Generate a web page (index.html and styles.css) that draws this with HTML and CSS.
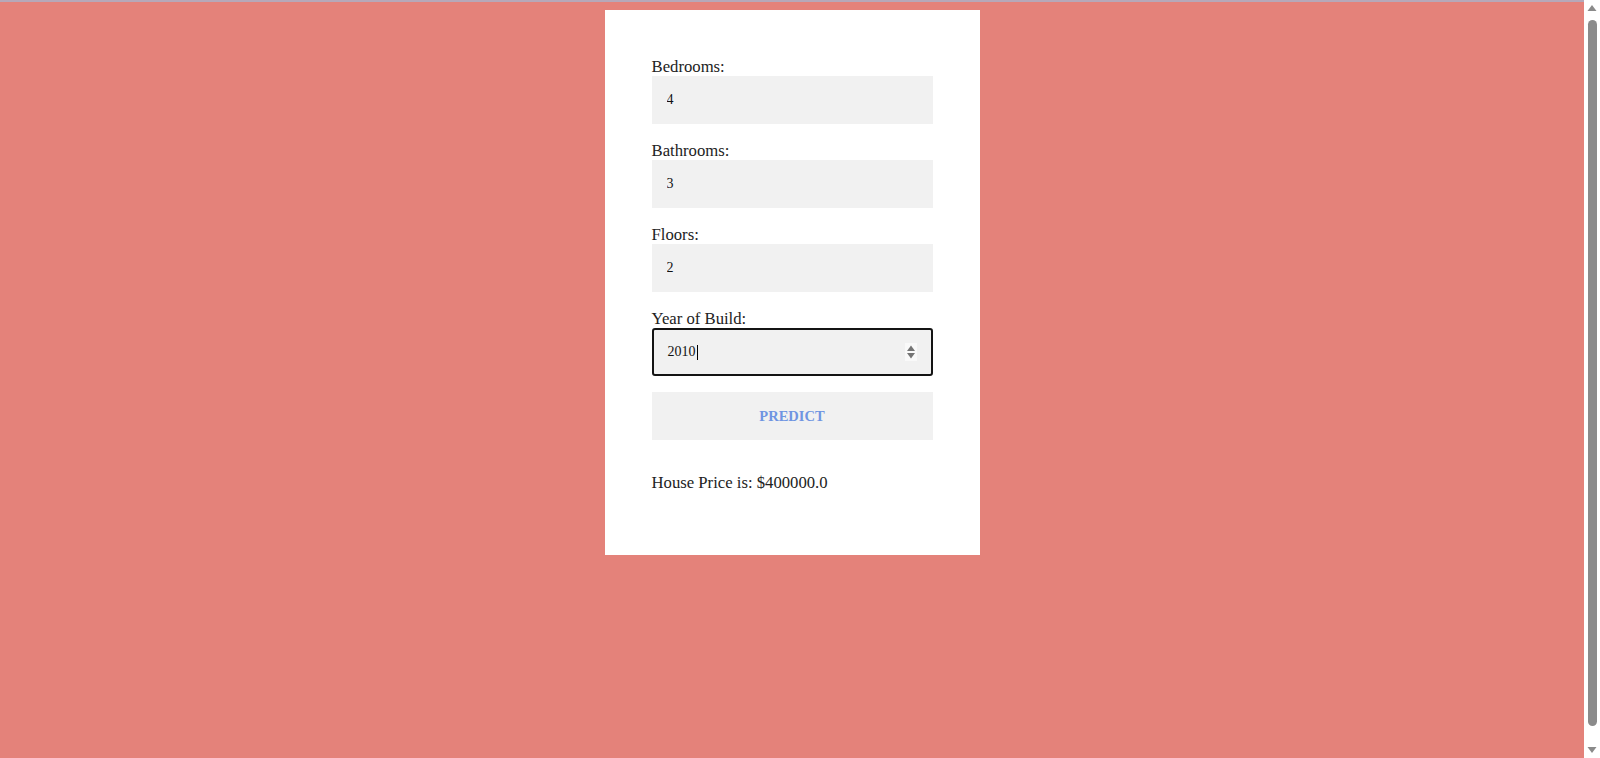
FILE: index.html
```html
<!DOCTYPE html>
<html lang="en">
<head>
<meta charset="utf-8">
<title>House Price Prediction</title>
<link rel="stylesheet" href="styles.css">
</head>
<body>
<div class="page">
  <main class="main">
    <form class="card">
      <label class="label" for="bedrooms">Bedrooms:</label>
      <input class="input" id="bedrooms" type="text" value="4">
      <label class="label" for="bathrooms">Bathrooms:</label>
      <input class="input" id="bathrooms" type="text" value="3">
      <label class="label" for="floors">Floors:</label>
      <input class="input" id="floors" type="text" value="2">
      <label class="label" for="year">Year of Build:</label>
      <div class="input input-focus" id="year">
        <span class="value">2010</span><span class="caret"></span>
        <svg class="spin" width="12" height="18" viewBox="0 0 12 18"><path d="M6 2.5 L10 8 H2 Z" fill="#747474"/><path d="M2 10 H10 L6 15.5 Z" fill="#747474"/></svg>
      </div>
      <button class="btn" type="button">PREDICT</button>
      <p class="result">House Price is: $400000.0</p>
    </form>
  </main>
  <div class="scrollbar">
    <svg class="arrow" width="16" height="16" viewBox="0 0 16 16"><path d="M3.5 11 L8 5 L12.5 11 Z" fill="#8a8a8a"/></svg>
    <div class="thumb"></div>
    <svg class="arrow" width="16" height="16" viewBox="0 0 16 16"><path d="M3.5 5 L12.5 5 L8 11 Z" fill="#8a8a8a"/></svg>
  </div>
</div>
</body>
</html>
```
FILE: styles.css
```css
html, body {
  margin: 0;
  padding: 0;
  height: 100%;
}
body {
  font-family: "Liberation Serif", "Times New Roman", serif;
  color: #222;
  background: #e4827a;
  overflow: hidden;
}
.page {
  display: flex;
  height: 100vh;
}
.main {
  flex: 1;
  border-top: 2px solid #b6a8b9;
  padding-top: 8px;
  display: flex;
  justify-content: center;
  align-items: flex-start;
}
.card {
  width: 375px;
  box-sizing: border-box;
  background: #fff;
  padding: 46px 47px 63px;
  display: flex;
  flex-direction: column;
}
.label {
  display: block;
  font-size: 16.7px;
  line-height: 19px;
  height: 20px;
  padding-top: 1px;
  box-sizing: border-box;
}
.input {
  display: block;
  box-sizing: border-box;
  width: 100%;
  height: 48px;
  margin: 0 0 16px;
  padding: 0 15px;
  border: none;
  background: #f1f1f1;
  font-family: "Liberation Serif", "Times New Roman", serif;
  font-size: 14px;
  color: #111;
  outline: none;
}
.input-focus {
  display: flex;
  align-items: center;
  border: 2px solid #141414;
  border-radius: 3px;
  padding: 0 14px 0 14px;
}
.caret {
  width: 1px;
  height: 15px;
  background: #000;
  margin-left: 1px;
}
.spin {
  margin-left: auto;
  background: #f9f9f9;
}
.btn {
  height: 48px;
  border: none;
  background: #f1f1f1;
  color: #6f95e2;
  font-family: "Liberation Serif", "Times New Roman", serif;
  font-weight: bold;
  font-size: 14.5px;
  padding: 0;
  margin: 0;
}
.result {
  margin: 0;
  padding-top: 34px;
  font-size: 16.7px;
  line-height: 18px;
}
.scrollbar {
  width: 16px;
  background: #fff;
  display: flex;
  flex-direction: column;
  align-items: center;
}
.arrow {
  flex: none;
}
.thumb {
  flex: 1;
  width: 9px;
  border-radius: 5px;
  background: #8b8b8b;
  margin: 4px 0 16px;
}
```
